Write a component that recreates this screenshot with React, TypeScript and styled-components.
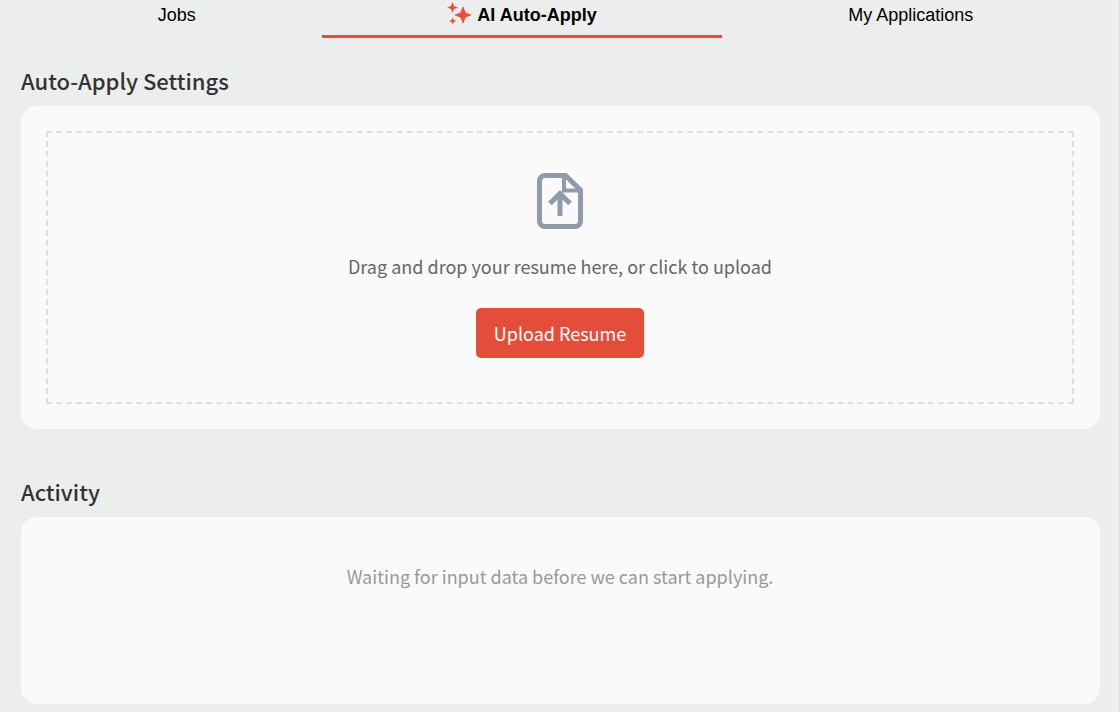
import React from "react";
import styled, { createGlobalStyle } from "styled-components";

const GlobalStyle = createGlobalStyle`
  *, *::before, *::after { box-sizing: border-box; }
  body {
    margin: 0;
    background: #eceeee;
    font-family: "Noto Sans CJK SC", "Noto Sans", sans-serif;
    color: #333;
  }
`;

const Page = styled.div`
  min-height: 100vh;
  border-right: 1px solid #dedfdf;
`;

const Tabs = styled.nav`
  display: flex;
  height: 38px;
  padding: 0 20px 0 32px;
`;

const Tab = styled.button<{ $active?: boolean }>`
  flex: 1 1 auto;
  display: flex;
  align-items: center;
  justify-content: center;
  gap: 4px;
  padding: 0 0 5px;
  border: 0;
  border-bottom: 3px solid ${(p) => (p.$active ? "#e44d3a" : "transparent")};
  background: none;
  color: #000;
  font: ${(p) => (p.$active ? 700 : 400)} 18px/24px "Liberation Sans", Arial, sans-serif;
  cursor: pointer;
`;

const Main = styled.main`
  display: flex;
  flex-direction: column;
  gap: 44px;
  padding: 24px 19px 8px 21px;
`;

const Section = styled.section`
  display: flex;
  flex-direction: column;
  gap: 8px;
`;

const Heading = styled.h2`
  margin: 0;
  font-size: 22px;
  line-height: 36px;
  font-weight: 500;
`;

const Card = styled.div`
  padding: 25px 26px 25px 25px;
  border-radius: 16px;
  background: #fafafa;
`;

const DropZone = styled.div`
  display: flex;
  flex-direction: column;
  align-items: center;
  padding: 40px 24px 44px;
  border: 2px dashed #e0e0e0;
`;

const Hint = styled.p`
  margin: 23px 0 28px;
  font-size: 18px;
  line-height: 28px;
  color: #666;
`;

const UploadButton = styled.button`
  height: 50px;
  padding: 0 18px;
  border: 0;
  border-radius: 5px;
  background: #e44d3a;
  color: #fff;
  font: inherit;
  font-size: 18px;
  cursor: pointer;
`;

const Status = styled.p`
  min-height: 137px;
  margin: 0;
  padding-top: 20px;
  font-size: 18px;
  line-height: 28px;
  text-align: center;
  color: #999;
`;

const Sparkles = () => (
  <svg width="26" height="26" viewBox="0 0 26 26" fill="#f24e35" aria-hidden="true">
    <path d="M16 4L18.600 10.400L25 13L18.600 15.600L16 22L13.400 15.600L7 13L13.400 10.400Z" />
    <path d="M5.500 0L7 4L11 5.500L7 7L5.500 11L4 7L0 5.500L4 4Z" />
    <path d="M5.700 15.200L6.800 17.900L9.500 19L6.800 20.100L5.700 22.800L4.600 20.100L1.900 19L4.600 17.900Z" />
  </svg>
);

const FileUpload = () => (
  <svg width="46" height="56" viewBox="0 0 46 56" fill="none" stroke="#8f9bab" aria-hidden="true">
    <path strokeWidth="5" d="M8 2.5H28.5L43.5 17V48A5.5 5.5 0 0 1 38 53.5H8A5.5 5.5 0 0 1 2.5 48V8A5.5 5.5 0 0 1 8 2.5Z" />
    <path strokeWidth="4" d="M27 3V17.500H43" />
    <path strokeWidth="5" d="M23 43V22M13 30.500L23 20.500L33 30.500" />
  </svg>
);

export default function App() {
  return (
    <Page>
      <GlobalStyle />
      <Tabs>
        <Tab type="button">Jobs</Tab>
        <Tab type="button" $active aria-current="page">
          <Sparkles />
          AI Auto-Apply
        </Tab>
        <Tab type="button">My Applications</Tab>
      </Tabs>
      <Main>
        <Section>
          <Heading>Auto-Apply Settings</Heading>
          <Card>
            <DropZone>
              <FileUpload />
              <Hint>Drag and drop your resume here, or click to upload</Hint>
              <UploadButton type="button">Upload Resume</UploadButton>
            </DropZone>
          </Card>
        </Section>
        <Section>
          <Heading>Activity</Heading>
          <Card>
            <Status>Waiting for input data before we can start applying.</Status>
          </Card>
        </Section>
      </Main>
    </Page>
  );
}
